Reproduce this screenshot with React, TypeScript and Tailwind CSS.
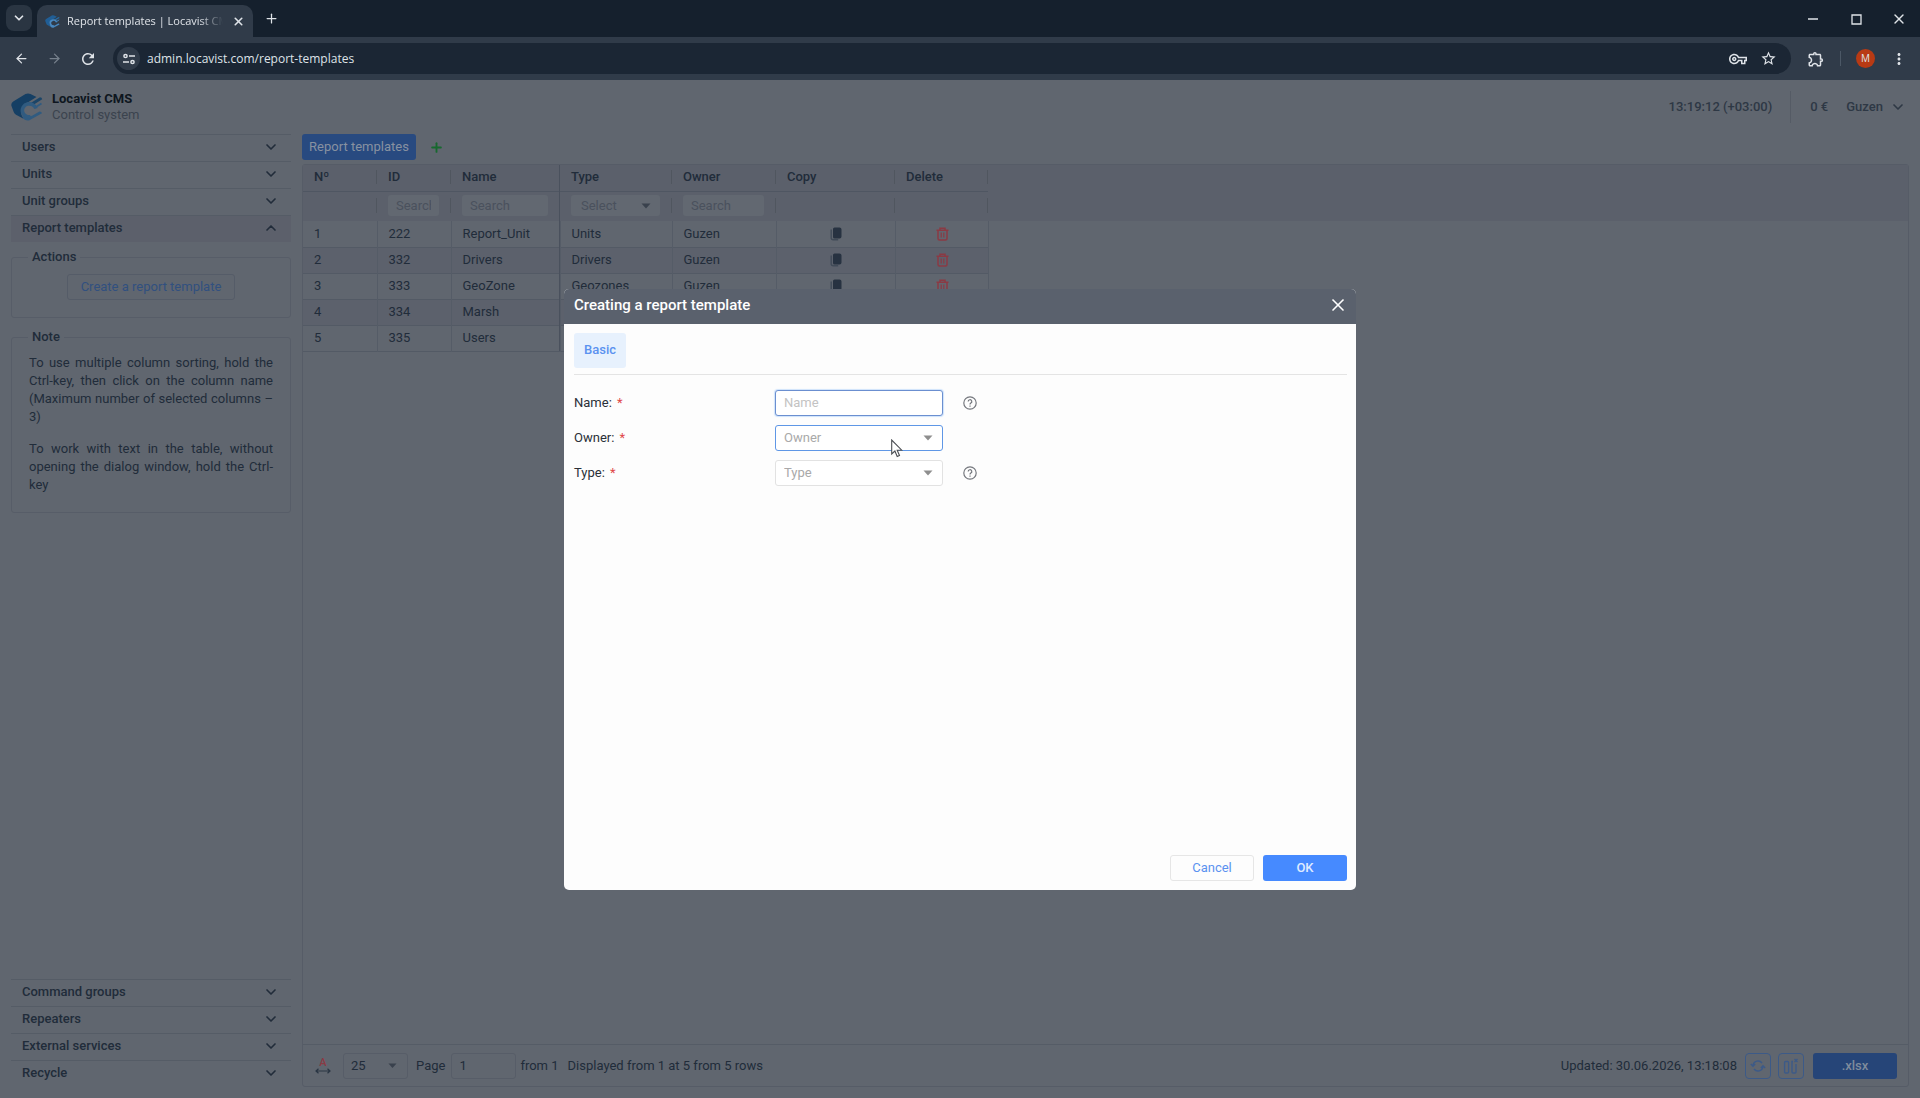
import type { ReactNode } from "react";
import { ArrowLeft, ArrowRight, ChevronDown, ChevronUp, Plus, X } from "lucide-react";
import {
  MdOutlineExtension,
  MdMoreVert,
  MdRefresh,
  MdStarBorder,
  MdOutlineVpnKey,
} from "react-icons/md";

const topMenu = ["Users", "Units", "Unit groups"];
const bottomMenu = ["Command groups", "Repeaters", "External services", "Recycle"];

const rows = [
  { id: 222, name: "Report_Unit", type: "Units", owner: "Guzen" },
  { id: 332, name: "Drivers", type: "Drivers", owner: "Guzen" },
  { id: 333, name: "GeoZone", type: "Geozones", owner: "Guzen" },
  { id: 334, name: "Marsh", type: "Marsh", owner: "Guzen" },
  { id: 335, name: "Users", type: "Users", owner: "Guzen" },
];

function Logo({ className }: { className: string }) {
  return (
    <svg viewBox="0 0 32 28" className={className} aria-hidden="true">
      <path
        d="M14.500 1Q17 0 19.500 1L25.500 4 17.500 9Q11 11.500 10 17 9.500 21.500 12.500 25.800L5 21.800Q3.300 20.800 2.700 19L.4 12.800Q-.2 10.300 2.200 8.600Z"
        fill="#153f64"
      />
      <path d="M18 11 29 4.200Q31 4.200 31.200 6.200L22.500 11.800Q20.500 10.800 18 11Z" fill="#1b4568" />
      <path d="M11 20.500 12 25.500Q14.500 28 18 27.400L31 20.300Q30.500 18.200 28.500 18.400L21 22.800Q15 25 11 20.500Z" fill="#305b80" />
      <path d="M25 15.500A7 6.500 0 1 0 19.500 23.800" fill="none" stroke="#305b80" strokeWidth="3.600" />
      <path d="M24 14.500 30.500 10.500" stroke="#305b80" strokeWidth="2" />
    </svg>
  );
}

function CaretDown({ className }: { className: string }) {
  return (
    <svg viewBox="0 0 10 6" className={className} aria-hidden="true">
      <path d="M.5.5h9L5 5.500Z" fill="currentColor" />
    </svg>
  );
}

function CopyIcon() {
  return (
    <svg width="12" height="14" viewBox="0 0 12 14" aria-hidden="true">
      <path d="M4.500.5h5a2 2 0 0 1 2 2v7a2 2 0 0 1-2 2h-5A1.500 1.500 0 0 1 3 10V2A1.500 1.500 0 0 1 4.500.5Z" fill="#273241" />
      <path d="M1.200 2.500v8.300a2 2 0 0 0 2 2h5" fill="none" stroke="#414b58" strokeWidth="1.400" />
    </svg>
  );
}

function TrashIcon() {
  return (
    <svg width="13" height="14" viewBox="0 0 13 14" fill="none" stroke="#8a3a44" strokeWidth="1.500" aria-hidden="true">
      <path d="M.5 3.200h12M4 3V1.200h5V3M2 3.500v8a1.500 1.500 0 0 0 1.500 1.500h6a1.500 1.500 0 0 0 1.500-1.500v-8" />
      <path d="M5.200 5.500v5M7.800 5.500v5" strokeWidth="1.200" />
    </svg>
  );
}

function HelpIcon() {
  return (
    <svg width="14" height="14" viewBox="0 0 14 14" fill="none" stroke="#74777d" strokeWidth="1.200" aria-hidden="true">
      <circle cx="7" cy="7" r="6.200" />
      <path d="M5.200 5.600a1.800 1.800 0 1 1 2.700 1.500c-.6.400-.9.700-.9 1.300" />
      <path d="M7 9.500v1.200" />
    </svg>
  );
}

function Browser() {
  return (
    <header className="font-['Open_Sans',sans-serif] text-[#dfe3e8]">
      <div className="flex h-[37px] items-end bg-[#15202d]">
        <button aria-label="Search tabs" className="mb-[6px] ml-[6px] flex size-[26px] items-center justify-center rounded-lg bg-[#2a3542]">
          <ChevronDown size={14} strokeWidth={3} />
        </button>
        <div className="ml-[5px] flex h-8 w-[216px] items-center rounded-t-[10px] bg-[#303b49] pr-2 pl-2">
          <Logo className="h-[13px] w-[15px] brightness-150" />
          <span className="ml-[7px] w-[156px] overflow-hidden mask-r-from-85% text-[11px] whitespace-nowrap">Report templates | Locavist CMS</span>
          <button aria-label="Close tab" className="ml-[9px]">
            <X size={13} strokeWidth={3} />
          </button>
        </div>
        <button aria-label="New tab" className="mb-[11px] ml-[11px]">
          <Plus size={15} />
        </button>
        <div className="mr-[13px] mb-[10px] ml-auto flex items-center gap-[27px]">
          <button aria-label="Minimize" className="flex size-4 items-center justify-center">
            <svg width="10" height="2" viewBox="0 0 10 2"><path d="M0 1h10" stroke="currentColor" strokeWidth="1.500" /></svg>
          </button>
          <button aria-label="Maximize" className="flex size-4 items-center justify-center">
            <svg width="11" height="11" viewBox="0 0 11 11"><path d="M1 1h9v9H1Z" fill="none" stroke="currentColor" strokeWidth="1.300" /></svg>
          </button>
          <button aria-label="Close" className="flex size-4 items-center justify-center">
            <X size={16} strokeWidth={2} />
          </button>
        </div>
      </div>
      <div className="flex h-[43px] items-center bg-[#303b49] pr-[12px] pl-[14px]">
        <ArrowLeft size={15} />
        <ArrowRight size={15} className="ml-[18px] text-[#76808c]" />
        <MdRefresh size={18} className="ml-[17px]" />
        <div className="ml-[16px] flex h-[31px] grow items-center rounded-full bg-[#1b2634] pr-[14px] pl-[4px]">
          <span className="flex size-[23px] items-center justify-center rounded-full bg-[#303b49]">
            <svg width="12" height="12" viewBox="0 0 12 12" fill="none" stroke="currentColor" strokeWidth="1.500" aria-hidden="true">
              <circle cx="2.500" cy="3" r="1.600" />
              <circle cx="9.500" cy="9" r="1.600" />
              <path d="M6 3h6M0 9h6" />
            </svg>
          </span>
          <input aria-label="Address" defaultValue="admin.locavist.com/report-templates" className="ml-[7px] grow bg-transparent text-xs outline-none" />
          <MdOutlineVpnKey size={18} />
          <MdStarBorder size={17} className="ml-[13px]" />
        </div>
        <MdOutlineExtension size={18} className="ml-[16px]" />
        <span className="ml-[15px] h-[15px] w-px bg-[#4c5866]" />
        <span className="ml-[15px] flex size-[19px] items-center justify-center rounded-full bg-[#b83a14] text-[10px]">M</span>
        <MdMoreVert size={18} className="ml-[15px]" />
      </div>
    </header>
  );
}

function MenuRow({ title, open }: { title: string; open?: boolean }) {
  return (
    <button
      className={`flex h-[27px] w-full items-center justify-between border-t border-[#555c66] pr-[12px] pb-[2px] pl-[11px] font-medium ${open ? "bg-[#5c606b]" : ""}`}
    >
      <span>{title}</span>
      {open ? <ChevronUp size={16} strokeWidth={2.5} /> : <ChevronDown size={16} strokeWidth={2.5} />}
    </button>
  );
}

function Panel({ title, children }: { title: string; children: ReactNode }) {
  return (
    <fieldset className="rounded-[3px] border border-[#575d68] px-[16px]">
      <legend className="px-[4px] leading-[18px] font-medium">{title}</legend>
      {children}
    </fieldset>
  );
}

function Sidebar() {
  return (
    <aside className="flex w-[280px] shrink-0 flex-col">
      <nav>
        {topMenu.map((title) => (
          <MenuRow key={title} title={title} />
        ))}
        <MenuRow title="Report templates" open />
      </nav>
      <div className="mt-[6px] flex flex-col gap-[10px]">
        <Panel title="Actions">
          <div className="flex justify-center pt-[8px] pb-[17px]">
            <button className="h-[26px] w-[168px] rounded-[3px] border border-[#555c68] text-[#31507f]">Create a report template</button>
          </div>
        </Panel>
        <Panel title="Note">
          <div className="px-px pt-[8px] pb-[18px] text-justify leading-[18px]">
            <p>
              To use multiple column sorting, hold the Ctrl-key, then click on the column name (Maximum number of
              selected columns – 3)
            </p>
            <p className="mt-[14px]">To work with text in the table, without opening the dialog window, hold the Ctrl-key</p>
          </div>
        </Panel>
      </div>
      <nav className="mt-auto">
        {bottomMenu.map((title) => (
          <MenuRow key={title} title={title} />
        ))}
      </nav>
    </aside>
  );
}

function HeadCell({ children }: { children: ReactNode }) {
  return (
    <th className="border-b border-[#4f5662] p-0 pb-[2px] text-left font-medium">
      <div className="flex h-[14px] items-center border-r border-[#50565f] pl-[11px]">{children}</div>
    </th>
  );
}

function FilterCell({ children }: { children?: ReactNode }) {
  return (
    <td className="p-0 pb-[2px]">
      <div className="flex h-[15px] items-center border-r border-[#50565f] pr-[11px] pl-[11px]">{children}</div>
    </td>
  );
}

function SearchInput({ label }: { label: string }) {
  return (
    <input
      aria-label={label}
      placeholder="Search"
      className="h-[21px] w-full min-w-0 rounded-[3px] bg-[#626871] px-[8px] outline-none placeholder:text-[#4a515d]"
    />
  );
}

function ReportTable() {
  return (
    <div className="flex grow flex-col rounded-[3px] border border-[#565c67]">
      <div className="relative grow">
        <div className="bg-[linear-gradient(#5b606b,#5b606b)] bg-[length:100%_56px] bg-no-repeat">
          <table className="w-[685px] table-fixed border-collapse">
            <colgroup>
              <col className="w-[74px]" />
              <col className="w-[74px]" />
              <col className="w-[109px]" />
              <col className="w-[112px]" />
              <col className="w-[104px]" />
              <col className="w-[119px]" />
              <col className="w-[93px]" />
            </colgroup>
            <thead>
              <tr className="h-[26px]">
                <HeadCell>Nº</HeadCell>
                <HeadCell>ID</HeadCell>
                <HeadCell>Name</HeadCell>
                <HeadCell>Type</HeadCell>
                <HeadCell>Owner</HeadCell>
                <HeadCell>Copy</HeadCell>
                <HeadCell>Delete</HeadCell>
              </tr>
              <tr className="h-[30px]">
                <FilterCell />
                <FilterCell><SearchInput label="Search by ID" /></FilterCell>
                <FilterCell><SearchInput label="Search by name" /></FilterCell>
                <FilterCell>
                  <div className="relative w-full">
                    <select aria-label="Filter by type" className="block h-[21px] w-full appearance-none rounded-[3px] bg-[#626871] px-[10px] text-[#4a515d] outline-none">
                      <option>Select</option>
                    </select>
                    <CaretDown className="pointer-events-none absolute top-[8px] right-[9px] w-[10px] text-[#39414d]" />
                  </div>
                </FilterCell>
                <FilterCell><SearchInput label="Search by owner" /></FilterCell>
                <FilterCell />
                <FilterCell />
              </tr>
            </thead>
            <tbody>
              {rows.map((row, i) => (
                <tr
                  key={row.id}
                  className="h-[26px] border-b border-[#535a65] even:bg-[#5c616c] [&>td]:border-r [&>td]:border-[#555c67] [&>td]:py-0 [&>td]:pl-[11px]"
                >
                  <td>{i + 1}</td>
                  <td>{row.id}</td>
                  <td>{row.name}</td>
                  <td>{row.type}</td>
                  <td>{row.owner}</td>
                  <td>
                    <button aria-label={`Copy ${row.name}`} className="flex w-full justify-center pr-[10px]"><CopyIcon /></button>
                  </td>
                  <td>
                    <button aria-label={`Delete ${row.name}`} className="flex w-full justify-center pr-[10px]"><TrashIcon /></button>
                  </td>
                </tr>
              ))}
            </tbody>
          </table>
        </div>
        {/* edge of the pinned columns */}
        <div className="absolute top-0 left-[256px] h-[186px] w-px bg-[#4a515d]" />
      </div>
      <TableFooter />
    </div>
  );
}

function TableFooter() {
  return (
    <footer className="flex h-[42px] items-center border-t border-[#555c66] pr-[11px] pl-[12px]">
      <button aria-label="Fit column width" className="flex w-4 flex-col items-center text-[11px] leading-[10px] font-medium text-[#8a3a44]">
        A
        <svg width="16" height="6" viewBox="0 0 16 6" fill="none" stroke="#2a3644" strokeWidth="1.200" aria-hidden="true">
          <path d="M1 3h14M3.500.8 1 3l2.500 2.200M12.500.8 15 3l-2.500 2.200" />
        </svg>
      </button>
      <div className="relative ml-[12px]">
        <select aria-label="Rows per page" className="block h-[26px] w-[65px] appearance-none rounded-[3px] border border-[#575d68] pl-[7px] outline-none">
          <option>25</option>
        </select>
        <CaretDown className="pointer-events-none absolute top-[10px] right-[11px] w-[9px] text-[#39414d]" />
      </div>
      <label htmlFor="page" className="ml-[8px]">Page</label>
      <input id="page" defaultValue="1" className="ml-[6px] h-[26px] w-[65px] rounded-[3px] border border-[#575d68] px-[7px] outline-none" />
      <span className="ml-[4px]">from 1</span>
      <span className="ml-[9px]">Displayed from 1 at 5 from 5 rows</span>
      <span className="ml-auto">Updated: 30.06.2026, 13:18:08</span>
      <button aria-label="Refresh" className="ml-[8px] flex size-[26px] items-center justify-center rounded-[4px] border border-[#3c5a88] text-[#3c5a88]">
        <svg width="16" height="14" viewBox="0 0 16 14" fill="none" stroke="currentColor" strokeWidth="1.400" aria-hidden="true">
          <path d="M3 6.500a5 5 0 0 1 9-2.500M13 7.500a5 5 0 0 1-9 2.500M.8 5 3 7.200 5.200 5M10.800 9 13 6.800 15.200 9" />
        </svg>
      </button>
      <button aria-label="Columns" className="ml-[7px] flex size-[26px] items-center justify-center rounded-[4px] border border-[#3c5a88] text-[#3c5a88]">
        <svg width="16" height="16" viewBox="0 0 16 16" fill="none" stroke="currentColor" strokeWidth="1.400" aria-hidden="true">
          <rect x="1.600" y="3.500" width="4" height="11.500" rx="1" />
          <path d="M10 3.500H9v10.500a1 1 0 0 0 1 1h2a1 1 0 0 0 1-1V6M11.500 1l3 3M14.500 1l-3 3" />
        </svg>
      </button>
      <button className="ml-[9px] h-[26px] w-[84px] rounded-[3px] bg-[#264578] font-medium text-[#7f8b9c]">.xlsx</button>
    </footer>
  );
}

const fieldClass =
  "block h-[26px] w-[168px] appearance-none rounded-[3px] border bg-white px-[8px] outline-none placeholder:text-[#c3c3c3]";

function Field({ id, label, help, children }: { id: string; label: string; help?: boolean; children: ReactNode }) {
  return (
    <div className="flex h-[26px] items-center">
      <label htmlFor={id} className="w-[201px] text-[#2a3038]">
        {label}: <span className="ml-[2px] text-[#e04848]">*</span>
      </label>
      <div className="relative">{children}</div>
      {help && (
        <button type="button" aria-label={`Help for ${label}`} className="ml-[20px]">
          <HelpIcon />
        </button>
      )}
    </div>
  );
}

function Dialog() {
  return (
    <form role="dialog" aria-labelledby="dialog-title" className="flex h-[601px] w-[792px] flex-col overflow-hidden rounded-[5px] bg-[#fdfdfd]">
      <div className="flex h-[35px] shrink-0 items-center justify-between bg-[#5a616d] pr-[8px] pb-[2px] pl-[10px] text-white">
        <h2 id="dialog-title" className="text-[15px] font-medium">Creating a report template</h2>
        <button type="button" aria-label="Close dialog">
          <X size={20} strokeWidth={2} />
        </button>
      </div>
      <div className="flex grow flex-col pt-[9px] pr-[9px] pb-[9px] pl-[10px]">
        <div className="border-b border-[#e4e4e4] pb-[6px]">
          <button type="button" className="block h-[35px] w-[52px] rounded-[3px] bg-[#e7f1fd] font-medium text-[#5b92f0]">Basic</button>
        </div>
        <div className="mt-[15px] flex flex-col gap-[9px]">
          <Field id="name" label="Name" help>
            <input id="name" placeholder="Name" className={`${fieldClass} border-[#6b8fd0] shadow-[0_0_1px_1px_#cfe3fb]`} />
          </Field>
          <Field id="owner" label="Owner">
            <select id="owner" className={`${fieldClass} border-[#5f97e6] text-[#a9a9a9]`}>
              <option>Owner</option>
            </select>
            <CaretDown className="pointer-events-none absolute top-[10px] right-[10px] w-[10px] text-[#8e8e8e]" />
            <svg viewBox="0 0 12 19" className="pointer-events-none absolute top-[14px] left-[116px] h-[19px] w-[12px]" aria-hidden="true">
              <path d="M.7 1v14l3.200-3 2.300 5.500 2.300-1-2.300-5.300h4.600Z" fill="#fff" stroke="#4a4d52" strokeWidth="1.100" />
            </svg>
          </Field>
          <Field id="type" label="Type" help>
            <select id="type" className={`${fieldClass} border-[#e2e2e2] text-[#a9a9a9]`}>
              <option>Type</option>
            </select>
            <CaretDown className="pointer-events-none absolute top-[10px] right-[10px] w-[10px] text-[#8e8e8e]" />
          </Field>
        </div>
        <div className="mt-auto flex justify-end gap-[9px]">
          <button type="button" className="h-[26px] w-[84px] rounded-[3px] border border-[#e6e6e6] text-[#5b92f0]">Cancel</button>
          <button type="button" className="h-[26px] w-[84px] rounded-[3px] bg-[#468aff] font-medium text-[#dfeaff]">OK</button>
        </div>
      </div>
    </form>
  );
}

export default function App() {
  return (
    <div className="flex h-screen flex-col">
      <Browser />
      <div className="relative flex grow flex-col bg-[#60666f] pr-[11px] pb-[11px] pl-[11px] font-['Roboto',sans-serif] text-[13px] text-[#212c3a]">
        <header className="flex h-[54px] items-center">
          <Logo className="h-7 w-8" />
          <div className="ml-[9px] leading-4">
            <div className="font-bold text-[#0e1620]">Locavist CMS</div>
            <div className="text-[#3b434e]">Control system</div>
          </div>
          <div className="ml-auto flex items-center text-[#2e3845]">
            <time className="font-medium">13:19:12 (+03:00)</time>
            <span className="ml-[18px] h-8 w-px bg-[#555b65]" />
            <span className="ml-[19px] font-medium">0 €</span>
            <button className="ml-[18px] flex items-center gap-[7px] pr-[3px] font-medium">
              Guzen
              <ChevronDown size={16} strokeWidth={2.5} />
            </button>
          </div>
        </header>
        <div className="flex grow gap-[11px]">
          <Sidebar />
          <main className="flex min-w-0 grow flex-col">
            <div className="mb-[4px] flex items-center">
              <button className="h-[26px] w-[114px] rounded-[3px] bg-[#284a80] text-[#8791a0]">Report templates</button>
              <button aria-label="Add tab" className="ml-[13px] text-[#17692f]">
                <Plus size={15} strokeWidth={3} />
              </button>
            </div>
            <ReportTable />
          </main>
        </div>
        <div className="absolute inset-0 flex items-center justify-center">
          <Dialog />
        </div>
      </div>
    </div>
  );
}
